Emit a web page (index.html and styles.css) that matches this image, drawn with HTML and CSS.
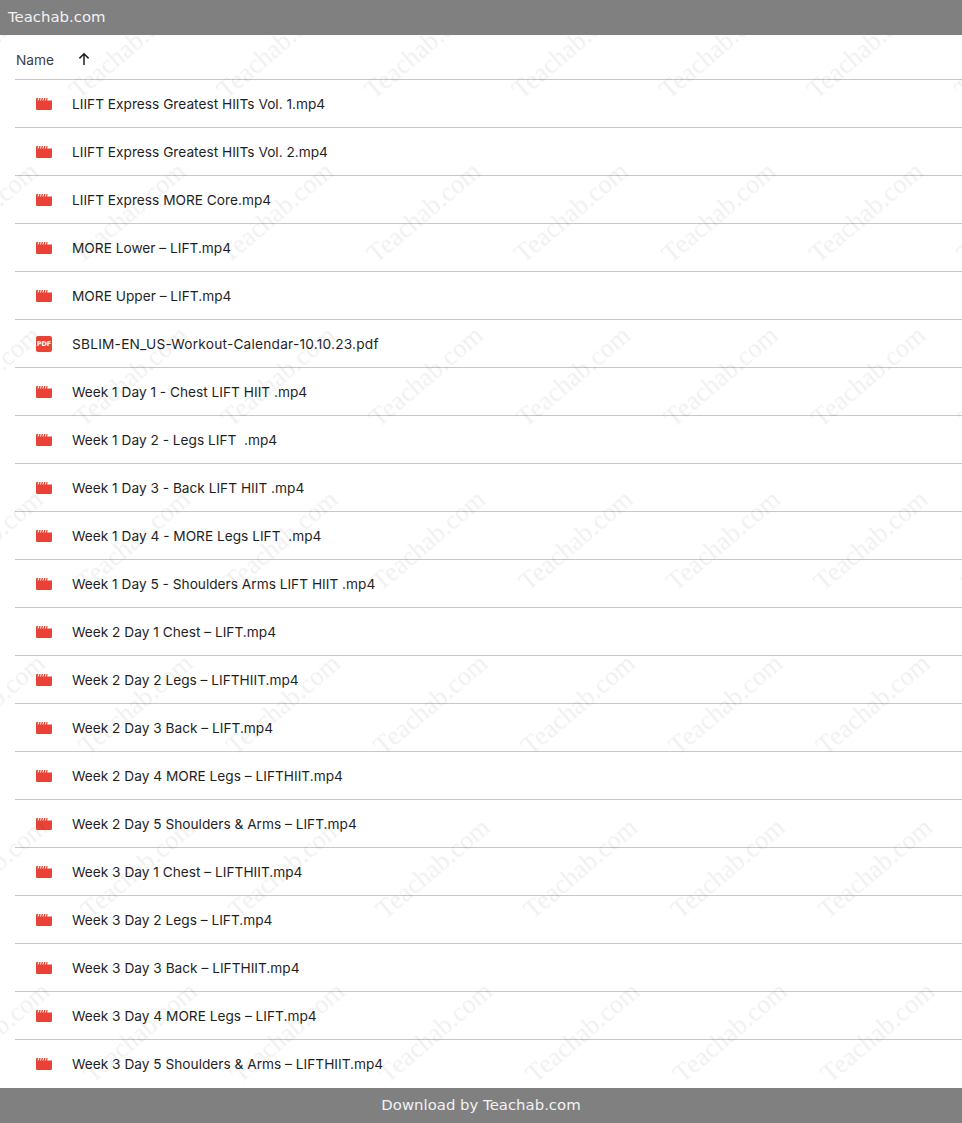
FILE: index.html
```html
<!DOCTYPE html>
<html lang="en">
<head>
<meta charset="utf-8">
<title>Teachab.com</title>
<link rel="stylesheet" href="styles.css">
</head>
<body>
<svg width="0" height="0" class="defs" aria-hidden="true">
  <defs>
    <symbol id="film" viewBox="0 0 16 12">
      <path fill="#ea4335" d="M0 1.2C0 .5.5 0 1.2 0h1.1l-.6 2.4h1l.6-2.4h1.4l-.6 2.4h1l.6-2.4h1.4l-.6 2.4h1l.6-2.4h1.4l-.6 2.4h1l.6-2.4h1.2l-.6 2.4H16v8.4c0 .7-.5 1.2-1.2 1.2H1.2C.5 12 0 11.500 0 10.800Z"/>
    </symbol>
  </defs>
</svg>
<header class="bar bar-top">Teachab.com</header>
<main class="list">
  <div class="head"><span class="head-name">Name</span>
    <svg class="arrow" viewBox="0 0 14 14" width="14" height="14"><path d="M7 13V2M2.400 6.400 7 1.800l4.600 4.600" fill="none" stroke="#1f1f1f" stroke-width="1.500"/></svg>
  </div>
  <div class="row"><svg class="ico"><use href="#film"/></svg><span>LIIFT Express Greatest HIITs Vol. 1.mp4</span></div>
  <div class="row"><svg class="ico"><use href="#film"/></svg><span>LIIFT Express Greatest HIITs Vol. 2.mp4</span></div>
  <div class="row"><svg class="ico"><use href="#film"/></svg><span>LIIFT Express MORE Core.mp4</span></div>
  <div class="row"><svg class="ico"><use href="#film"/></svg><span>MORE Lower – LIFT.mp4</span></div>
  <div class="row"><svg class="ico"><use href="#film"/></svg><span>MORE Upper – LIFT.mp4</span></div>
  <div class="row"><i class="pdf">PDF</i><span class="spaced">SBLIM-EN_US-Workout-Calendar-10.10.23.pdf</span></div>
  <div class="row"><svg class="ico"><use href="#film"/></svg><span>Week 1 Day 1 - Chest LIFT HIIT .mp4</span></div>
  <div class="row"><svg class="ico"><use href="#film"/></svg><span>Week 1 Day 2 - Legs LIFT&nbsp; .mp4</span></div>
  <div class="row"><svg class="ico"><use href="#film"/></svg><span>Week 1 Day 3 - Back LIFT HIIT .mp4</span></div>
  <div class="row"><svg class="ico"><use href="#film"/></svg><span>Week 1 Day 4 - MORE Legs LIFT&nbsp; .mp4</span></div>
  <div class="row"><svg class="ico"><use href="#film"/></svg><span>Week 1 Day 5 - Shoulders Arms LIFT HIIT .mp4</span></div>
  <div class="row"><svg class="ico"><use href="#film"/></svg><span>Week 2 Day 1 Chest – LIFT.mp4</span></div>
  <div class="row"><svg class="ico"><use href="#film"/></svg><span>Week 2 Day 2 Legs – LIFTHIIT.mp4</span></div>
  <div class="row"><svg class="ico"><use href="#film"/></svg><span>Week 2 Day 3 Back – LIFT.mp4</span></div>
  <div class="row"><svg class="ico"><use href="#film"/></svg><span>Week 2 Day 4 MORE Legs – LIFTHIIT.mp4</span></div>
  <div class="row"><svg class="ico"><use href="#film"/></svg><span>Week 2 Day 5 Shoulders &amp; Arms – LIFT.mp4</span></div>
  <div class="row"><svg class="ico"><use href="#film"/></svg><span>Week 3 Day 1 Chest – LIFTHIIT.mp4</span></div>
  <div class="row"><svg class="ico"><use href="#film"/></svg><span>Week 3 Day 2 Legs – LIFT.mp4</span></div>
  <div class="row"><svg class="ico"><use href="#film"/></svg><span>Week 3 Day 3 Back – LIFTHIIT.mp4</span></div>
  <div class="row"><svg class="ico"><use href="#film"/></svg><span>Week 3 Day 4 MORE Legs – LIFT.mp4</span></div>
  <div class="row"><svg class="ico"><use href="#film"/></svg><span>Week 3 Day 5 Shoulders &amp; Arms – LIFTHIIT.mp4</span></div>
  <svg class="watermark" width="100%" height="100%" aria-hidden="true">
    <defs>
      <pattern id="wm" width="147.500" height="164" x="53" y="-65" patternUnits="userSpaceOnUse" patternTransform="skewX(0.8)">
        <text class="wm-text" x="0" y="0" transform="translate(25 130) rotate(-40)">Teachab.com</text>
      </pattern>
    </defs>
    <rect width="100%" height="100%" fill="url(#wm)"/>
  </svg>
</main>
<footer class="bar bar-bottom">Download by Teachab.com</footer>
</body>
</html>
```
FILE: styles.css
```css
* { box-sizing: border-box; }
html, body { margin: 0; padding: 0; background: #fff; }
body { width: 962px; height: 1123px; overflow: hidden; display: flex; flex-direction: column; }
.defs { position: absolute; }
.bar { height: 35px; background: #808080; color: #f2f2f2; font: 14.900px/35px "DejaVu Sans", sans-serif; flex: none; }
.bar-top { padding-left: 8px; }
.bar-bottom { text-align: center; }
.list { position: relative; flex: 1; padding-left: 15px; font: 13.700px/20px Inter, sans-serif; color: #1f1f1f; }
.head { height: 45px; display: flex; align-items: center; border-bottom: 1px solid #c7c7c7; padding: 6px 0 0 1px; color: #3c4043; }
.head-name { width: 61px; }
.arrow { margin-top: -3px; }
.row { height: 48px; display: flex; align-items: center; border-bottom: 1px solid #c7c7c7; padding-left: 21px; }
.row:last-of-type { border-bottom: 0; }
.ico { width: 16px; height: 12px; flex: none; margin-right: 20px; }
.pdf { width: 16px; height: 16px; flex: none; margin-right: 20px; background: #ea4335; border-radius: 2px; color: #fff; font: bold 6.500px/16px "DejaVu Sans", sans-serif; text-align: center; }
.spaced { letter-spacing: .22px; }
.watermark { position: absolute; inset: 0; pointer-events: none; }
.wm-text { font: 26.500px "Liberation Serif", serif; fill: rgba(0, 0, 0, .06); }
```
